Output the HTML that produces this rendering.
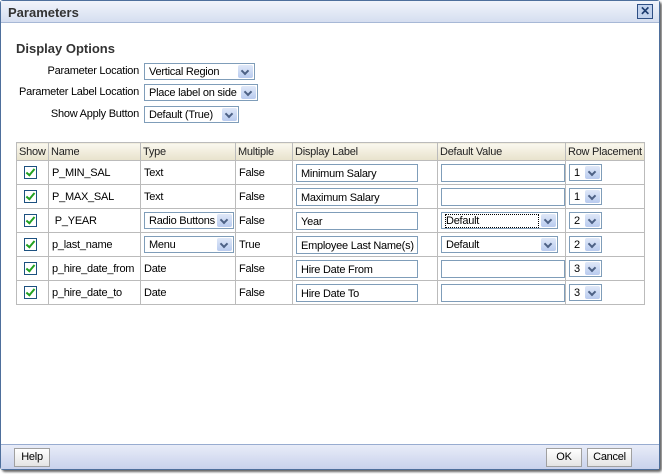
<!DOCTYPE html>
<html><head><style>
*{box-sizing:border-box;margin:0;padding:0}
body{width:662px;height:474px;overflow:hidden;background:#fff;font-family:"Liberation Sans",sans-serif;font-size:11px;letter-spacing:-0.25px;color:#000;position:relative}
.a{position:absolute}
.win{left:0;top:0;width:660px;height:470px;border:1px solid #4e6f9c;border-radius:3px;background:#fff;box-shadow:2px 2px 2px #666}
.title{left:1px;top:1px;width:658px;height:22px;background:linear-gradient(#f1f4fb,#d5def0);border-bottom:1px solid #a7b8d6;font-weight:bold;font-size:13px;color:#333;padding:4px 0 0 7px;letter-spacing:0}
.x{left:637px;top:4px;width:16px;height:15px;border:1px solid #2e4f85;background:#c3d3ee;color:#1d3c70;font-size:12px;line-height:13px;text-align:center;font-weight:bold}
.sel{border:1px solid #7f9db9;background:#fff;height:17px;padding:2px 0 0 4px;white-space:nowrap;overflow:hidden}
.sel i{position:absolute;right:1px;top:1px;width:15px;height:13px;background:linear-gradient(#dfe8f8,#b9cbef);border-radius:2px}
.sel i:after{content:"";position:absolute;left:4px;top:3px;width:4px;height:4px;border-right:2px solid #4d6185;border-bottom:2px solid #4d6185;transform:rotate(45deg)}
.lbl{text-align:right;width:139px}
table{position:absolute;left:16px;top:142px;border-collapse:collapse;border:1px solid #aaa;table-layout:fixed;width:628px}
td,th{border:1px solid #bbb;height:24px;padding:0 0 0 3px;text-align:left;font-weight:normal;position:relative;white-space:nowrap;overflow:visible}
th{height:18px;background:linear-gradient(#faf8ef,#e8e2cc);color:#222;padding-left:2px}
.cb{display:inline-block;width:13px;height:13px;border:1px solid #1c5180;background:#fff;margin-left:4px;vertical-align:middle;position:relative}
.cb:after{content:"";position:absolute;left:3px;top:0px;width:3px;height:7px;border-right:2px solid #21a121;border-bottom:2px solid #21a121;transform:rotate(40deg)}
.in{position:absolute;left:3px;top:3px;height:18px;border:1px solid #7f9db9;background:#fff;padding:3px 0 0 4px}
.foot{left:1px;top:444px;width:658px;height:25px;background:linear-gradient(#e8ecf8,#c9d2ec);border-top:1px solid #98acd0}
.btn{top:448px;height:19px;border:1px solid #a0a0a0;background:linear-gradient(#fff,#e4e4e4);text-align:center;line-height:17px}
</style></head><body>
<div class="a win"></div>
<div class="a title">Parameters</div>
<div class="a x">✕</div>
<div class="a" style="left:16px;top:41px;font-size:13px;font-weight:bold;color:#333;letter-spacing:0">Display Options</div>
<div class="a lbl" style="top:65px">Parameter Location</div>
<div class="a sel" style="left:144px;top:63px;width:111px">Vertical Region<i></i></div>
<div class="a lbl" style="top:86px">Parameter Label Location</div>
<div class="a sel" style="left:144px;top:84px;width:114px">Place label on side<i></i></div>
<div class="a lbl" style="top:108px">Show Apply Button</div>
<div class="a sel" style="left:144px;top:106px;width:95px">Default (True)<i></i></div>
<table>
<colgroup><col style="width:32px"><col style="width:92px"><col style="width:95px"><col style="width:57px"><col style="width:145px"><col style="width:128px"><col style="width:79px"></colgroup>
<tr><th>Show</th><th>Name</th><th>Type</th><th>Multiple</th><th>Display Label</th><th>Default Value</th><th>Row Placement</th></tr>
<tr><td><span class="cb"></span></td><td>P_MIN_SAL</td><td>Text</td><td>False</td><td><div class="in" style="width:122px">Minimum Salary</div></td><td><div class="in" style="width:124px"></div></td><td><div class="a sel" style="left:3px;top:3px;width:33px">1<i></i></div></td></tr>
<tr><td><span class="cb"></span></td><td>P_MAX_SAL</td><td>Text</td><td>False</td><td><div class="in" style="width:122px">Maximum Salary</div></td><td><div class="in" style="width:124px"></div></td><td><div class="a sel" style="left:3px;top:3px;width:33px">1<i></i></div></td></tr>
<tr><td><span class="cb"></span></td><td>&nbsp;P_YEAR</td><td><div class="a sel" style="left:3px;top:3px;width:90px">Radio Buttons<i></i></div></td><td>False</td><td><div class="in" style="width:122px">Year</div></td><td><div class="a sel" style="left:3px;top:3px;width:117px"><span style="outline:1px dotted #000">Default&nbsp;&nbsp;&nbsp;&nbsp;&nbsp;&nbsp;&nbsp;&nbsp;&nbsp;&nbsp;&nbsp;&nbsp;&nbsp;&nbsp;&nbsp;&nbsp;&nbsp;&nbsp;&nbsp;&nbsp;&nbsp;</span><i></i></div></td><td><div class="a sel" style="left:3px;top:3px;width:33px">2<i></i></div></td></tr>
<tr><td><span class="cb"></span></td><td>p_last_name</td><td><div class="a sel" style="left:3px;top:3px;width:90px">Menu<i></i></div></td><td>True</td><td><div class="in" style="width:122px">Employee Last Name(s)</div></td><td><div class="a sel" style="left:3px;top:3px;width:117px">Default<i></i></div></td><td><div class="a sel" style="left:3px;top:3px;width:33px">2<i></i></div></td></tr>
<tr><td><span class="cb"></span></td><td>p_hire_date_from</td><td>Date</td><td>False</td><td><div class="in" style="width:122px">Hire Date From</div></td><td><div class="in" style="width:124px"></div></td><td><div class="a sel" style="left:3px;top:3px;width:33px">3<i></i></div></td></tr>
<tr><td><span class="cb"></span></td><td>p_hire_date_to</td><td>Date</td><td>False</td><td><div class="in" style="width:122px">Hire Date To</div></td><td><div class="in" style="width:124px"></div></td><td><div class="a sel" style="left:3px;top:3px;width:33px">3<i></i></div></td></tr>
</table>
<div class="a foot"></div>
<div class="a btn" style="left:14px;width:36px">Help</div>
<div class="a btn" style="left:546px;width:36px">OK</div>
<div class="a btn" style="left:587px;width:45px">Cancel</div>
</body></html>
